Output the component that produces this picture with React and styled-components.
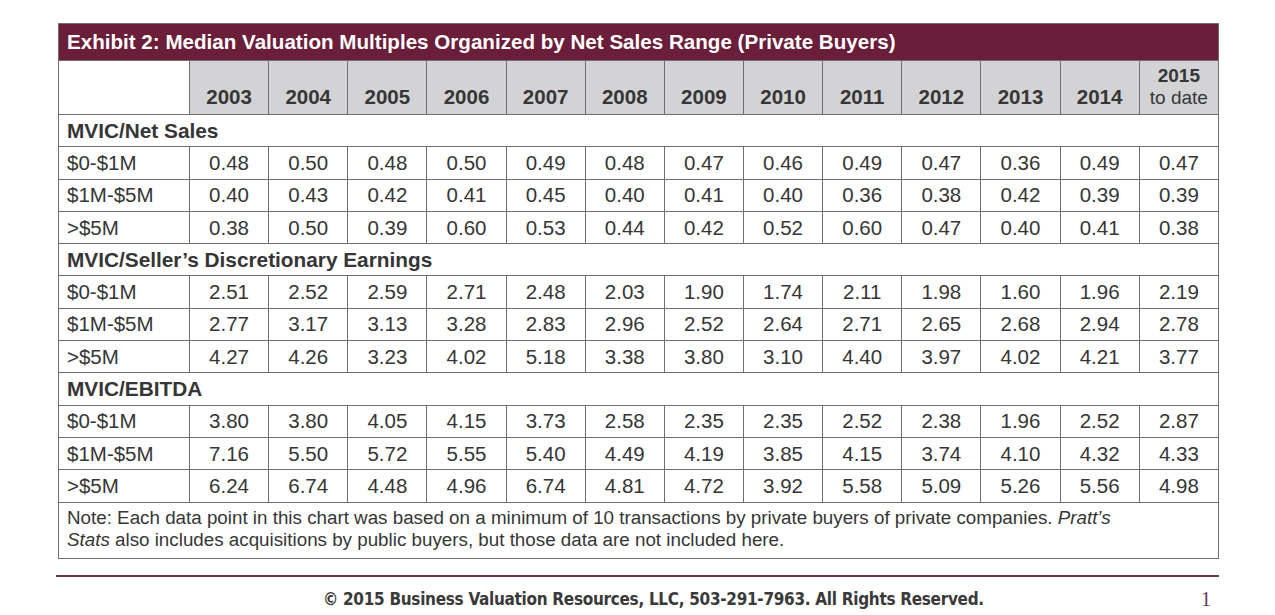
import React from "react";
import styled, { createGlobalStyle } from "styled-components";

const Global = createGlobalStyle`
  html, body { margin: 0; padding: 0; background: #fff; }
  body { font-family: "Liberation Sans", Arial, sans-serif; color: #363636; }
`;

const Page = styled.div`
  width: 1275px;
  height: 615px;
  box-sizing: border-box;
  padding: 23px 0 0 58px;
  display: flex;
  flex-direction: column;
`;

const Table = styled.table`
  width: 1161px;
  border-collapse: collapse;
  table-layout: fixed;
  border: 1px solid #6f6f6f;
`;

const LabelCol = styled.col`
  width: 131px;
`;

const YearCol = styled.col``;

const TitleCell = styled.th`
  background: #6b1e3a;
  color: #fff;
  font-size: 20.6px;
  font-weight: bold;
  text-align: left;
  padding: 0 0 0 8px;
  height: 36px;
  border: 1px solid #6f6f6f;
`;

const CornerCell = styled.th`
  background: #fff;
  border: 1px solid #6f6f6f;
`;

const YearCell = styled.th`
  background: #d3d3d5;
  border: 1px solid #6f6f6f;
  font-size: 20.5px;
  font-weight: bold;
  line-height: 23px;
  color: #363636;
  height: 47px;
  padding: 0 0 6px;
  vertical-align: bottom;
  text-align: center;
`;

const YearTop = styled.span`
  display: block;
  font-weight: bold;
  font-size: 19px;
  line-height: 23px;
`;

const YearSub = styled.span`
  display: block;
  font-weight: normal;
  font-size: 19px;
  line-height: 21px;
`;

const SectionCell = styled.td`
  font-size: 20.8px;
  font-weight: bold;
  height: 31.3px;
  padding: 0 0 0 8px;
  border: 1px solid #6f6f6f;
  vertical-align: middle;
`;

const LabelCell = styled.td`
  font-size: 20.5px;
  height: 31.3px;
  padding: 0 0 0 8px;
  border: 1px solid #6f6f6f;
  white-space: nowrap;
`;

const ValueCell = styled.td`
  font-size: 20.5px;
  height: 31.3px;
  padding: 0;
  text-align: center;
  border: 1px solid #6f6f6f;
`;

const NoteCell = styled.td`
  font-size: 18.8px;
  line-height: 22px;
  height: 56px;
  padding: 2px 60px 4px 8px;
  box-sizing: border-box;
  border: 1px solid #6f6f6f;
  vertical-align: middle;
`;

const Title = styled.i`
  font-style: italic;
`;

const Footer = styled.div`
  width: 1163px;
  margin: 16px 0 0 -2px;
  border-top: 2px solid #6e3650;
  display: flex;
  align-items: center;
  padding: 11px 0 0 267px;
  box-sizing: border-box;
`;

const Copyright = styled.div`
  font-family: "DejaVu Sans Condensed", "Liberation Sans Narrow", "Arial Narrow", "Liberation Sans", sans-serif;
  font-stretch: semi-condensed;
  font-weight: bold;
  font-size: 17px;
  letter-spacing: -0.3px;
  color: #3a3a3a;
  flex: 1;
`;

const PageNum = styled.div`
  font-family: "Liberation Serif", "Times New Roman", serif;
  font-size: 20px;
  color: #6e3650;
  padding-right: 8px;
`;

const years = ["2003","2004","2005","2006","2007","2008","2009","2010","2011","2012","2013","2014"];

const sections = [
  {
    title: "MVIC/Net Sales",
    rows: [
      ["$0-$1M", "0.48 0.50 0.48 0.50 0.49 0.48 0.47 0.46 0.49 0.47 0.36 0.49 0.47"],
      ["$1M-$5M", "0.40 0.43 0.42 0.41 0.45 0.40 0.41 0.40 0.36 0.38 0.42 0.39 0.39"],
      [">$5M", "0.38 0.50 0.39 0.60 0.53 0.44 0.42 0.52 0.60 0.47 0.40 0.41 0.38"],
    ],
  },
  {
    title: "MVIC/Seller\u2019s Discretionary Earnings",
    rows: [
      ["$0-$1M", "2.51 2.52 2.59 2.71 2.48 2.03 1.90 1.74 2.11 1.98 1.60 1.96 2.19"],
      ["$1M-$5M", "2.77 3.17 3.13 3.28 2.83 2.96 2.52 2.64 2.71 2.65 2.68 2.94 2.78"],
      [">$5M", "4.27 4.26 3.23 4.02 5.18 3.38 3.80 3.10 4.40 3.97 4.02 4.21 3.77"],
    ],
  },
  {
    title: "MVIC/EBITDA",
    rows: [
      ["$0-$1M", "3.80 3.80 4.05 4.15 3.73 2.58 2.35 2.35 2.52 2.38 1.96 2.52 2.87"],
      ["$1M-$5M", "7.16 5.50 5.72 5.55 5.40 4.49 4.19 3.85 4.15 3.74 4.10 4.32 4.33"],
      [">$5M", "6.24 6.74 4.48 4.96 6.74 4.81 4.72 3.92 5.58 5.09 5.26 5.56 4.98"],
    ],
  },
];

export default function App() {
  return (
    <>
      <Global />
      <Page>
        <Table>
          <colgroup>
            <LabelCol />
            {Array.from({ length: 13 }).map((_, i) => (
              <YearCol key={i} />
            ))}
          </colgroup>
          <thead>
            <tr>
              <TitleCell colSpan={14}>
                Exhibit 2: Median Valuation Multiples Organized by Net Sales Range (Private Buyers)
              </TitleCell>
            </tr>
            <tr>
              <CornerCell />
              {years.map((y) => (
                <YearCell key={y}>{y}</YearCell>
              ))}
              <YearCell>
                <YearTop>2015</YearTop>
                <YearSub>to date</YearSub>
              </YearCell>
            </tr>
          </thead>
          <tbody>
            {sections.map((s) => (
              <React.Fragment key={s.title}>
                <tr>
                  <SectionCell colSpan={14}>{s.title}</SectionCell>
                </tr>
                {s.rows.map(([label, vals]) => (
                  <tr key={label}>
                    <LabelCell>{label}</LabelCell>
                    {vals.split(" ").map((v, i) => (
                      <ValueCell key={i}>{v}</ValueCell>
                    ))}
                  </tr>
                ))}
              </React.Fragment>
            ))}
            <tr>
              <NoteCell colSpan={14}>
                Note: Each data point in this chart was based on a minimum of 10 transactions by private buyers of private companies. <Title>Pratt’s</Title> <Title>Stats</Title> also includes acquisitions by public buyers, but those data are not included here.
              </NoteCell>
            </tr>
          </tbody>
        </Table>
        <Footer>
          <Copyright>© 2015 Business Valuation Resources, LLC, 503-291-7963. All Rights Reserved.</Copyright>
          <PageNum>1</PageNum>
        </Footer>
      </Page>
    </>
  );
}
